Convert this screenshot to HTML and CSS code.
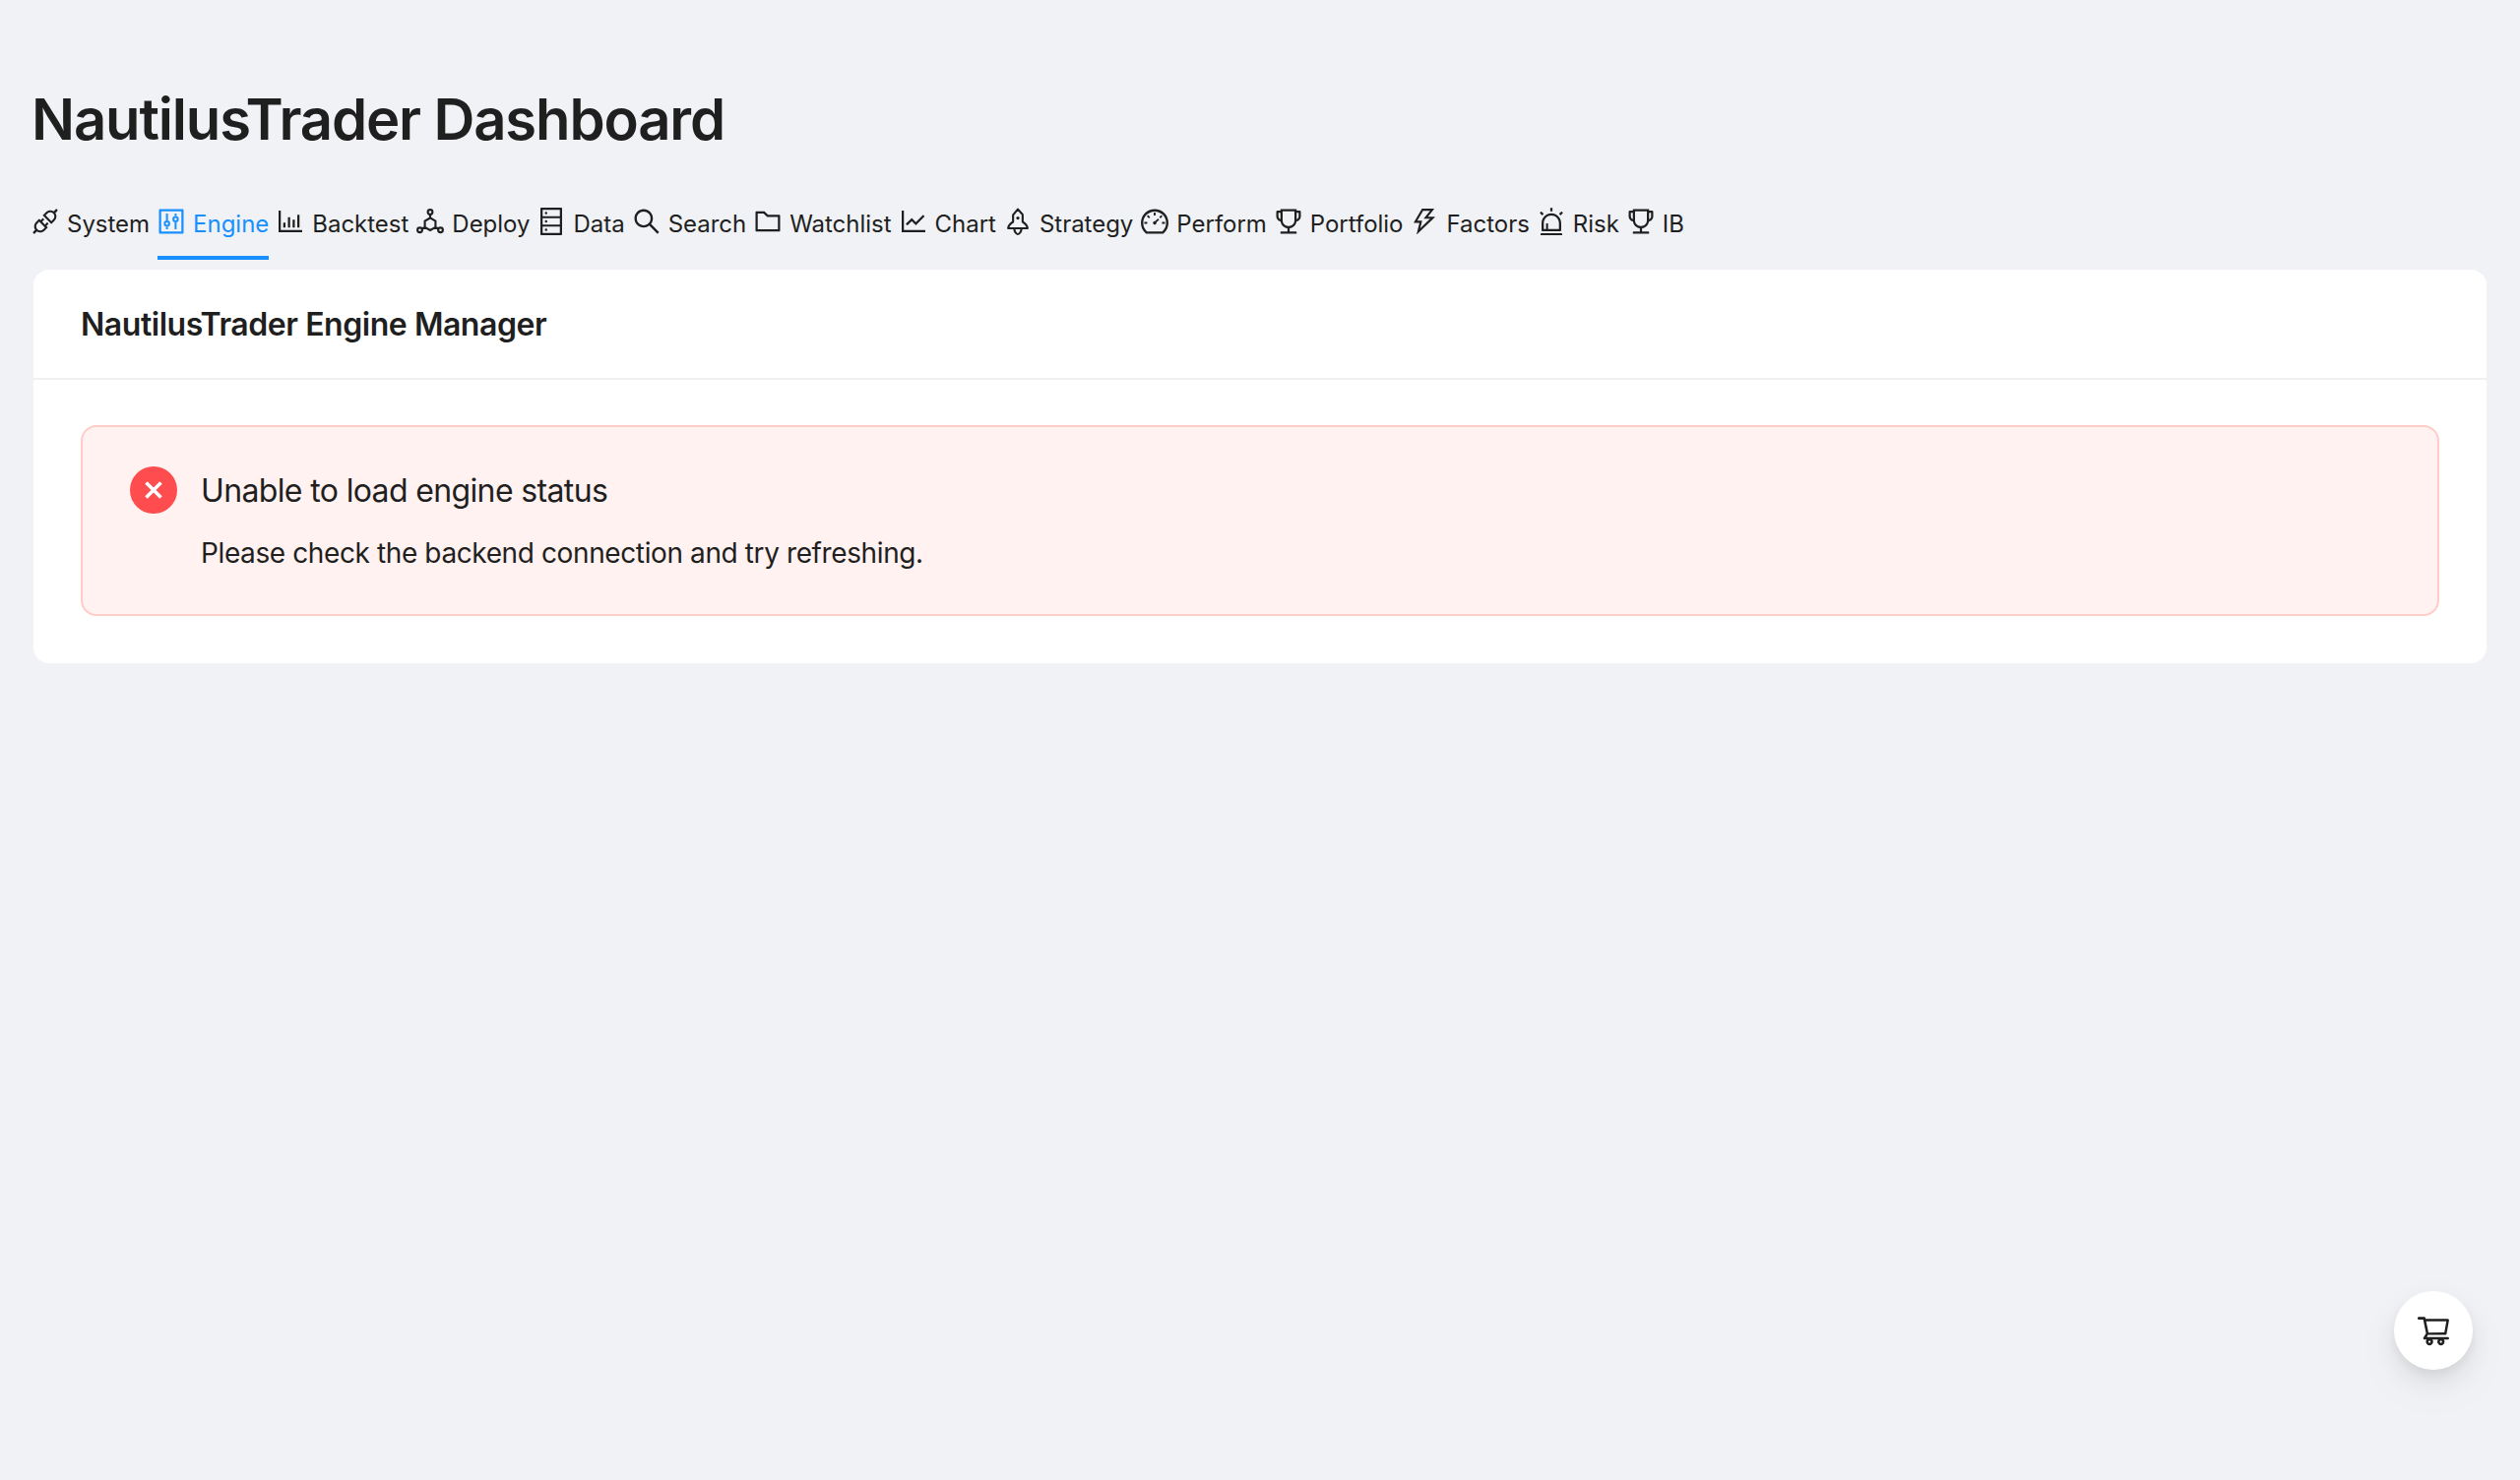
FILE: index.html
```html
<!DOCTYPE html>
<html lang="en">
<head>
<meta charset="utf-8">
<title>NautilusTrader Dashboard</title>
<link rel="stylesheet" href="styles.css">
</head>
<body>
<svg class="defs" aria-hidden="true">
  <symbol id="i-trophy" viewBox="64 64 896 896"><path d="M868 160h-92v-40c0-4.4-3.6-8-8-8H256c-4.4 0-8 3.6-8 8v40h-92a44 44 0 00-44 44v148c0 81.7 60 149.6 138.2 162C265.7 630.2 359 721.7 476 734.5v105.2H280c-17.7 0-32 14.3-32 32V904c0 4.4 3.6 8 8 8h512c4.4 0 8-3.6 8-8v-32.3c0-17.7-14.3-32-32-32H548V734.5C665 721.7 758.3 630.2 773.8 514 852 501.6 912 433.7 912 352V204a44 44 0 00-44-44zM184 352V232h64v207.6a91.99 91.99 0 01-64-87.6zm520 128c0 49.1-19.1 95.4-53.9 130.1-34.8 34.8-81 53.9-130.1 53.9h-16c-49.1 0-95.4-19.1-130.1-53.9-34.8-34.8-53.9-81-53.9-130.1V184h384v296zm136-128c0 41-26.9 75.8-64 87.6V232h64v120z"/></symbol>
</svg>
<main class="page">
  <h1 class="title">NautilusTrader Dashboard</h1>
  <nav class="tabs">
    <a class="tab"><svg class="ico" viewBox="64 64 896 896"><path d="M917.7 148.8l-42.4-42.4c-1.6-1.6-3.6-2.3-5.7-2.3s-4.1.8-5.7 2.3l-76.1 76.1a199.27 199.27 0 00-112.1-34.3c-51.2 0-102.4 19.5-141.5 58.6L432.3 308.7a8.03 8.03 0 000 11.3L704 591.7c1.6 1.6 3.6 2.3 5.7 2.3 2 0 4.1-.8 5.7-2.3l101.9-101.9c68.9-69 77-175.7 24.3-253.5l76.1-76.1c3.1-3.2 3.1-8.3 0-11.4zM769.1 441.7l-59.4 59.4-186.8-186.8 59.4-59.4c24.9-24.9 58.1-38.7 93.4-38.7 35.3 0 68.4 13.7 93.4 38.7 24.9 24.9 38.7 58.1 38.7 93.4 0 35.3-13.8 68.4-38.7 93.4zm-190.2 105a8.03 8.03 0 00-11.3 0L501 613.3 410.7 523l66.7-66.7c3.1-3.1 3.1-8.2 0-11.3L441 408.6a8.03 8.03 0 00-11.3 0L363 475.3l-43-43a7.85 7.85 0 00-5.7-2.3c-2 0-4.1.8-5.7 2.3L206.8 534.2c-68.9 69-77 175.7-24.3 253.5l-76.1 76.1a8.03 8.03 0 000 11.3l42.4 42.4c1.6 1.6 3.6 2.3 5.7 2.3s4.1-.8 5.7-2.3l76.1-76.1c33.7 22.9 72.9 34.3 112.1 34.3 51.2 0 102.4-19.5 141.5-58.6l101.9-101.9c3.1-3.1 3.1-8.2 0-11.3l-43-43 66.7-66.7c3.1-3.1 3.1-8.2 0-11.3l-36.6-36.2zM441.7 769.1a131.32 131.32 0 01-93.4 38.7c-35.3 0-68.4-13.7-93.4-38.7a131.32 131.32 0 01-38.7-93.4c0-35.3 13.7-68.4 38.7-93.4l59.4-59.4 186.8 186.8-59.4 59.4z"/></svg><span>System</span></a>
    <a class="tab active"><svg class="ico" viewBox="64 64 896 896"><path fill-rule="evenodd" d="M144 112h736c17.7 0 32 14.3 32 32v736c0 17.7-14.3 32-32 32H144c-17.700 0-32-14.300-32-32V144c0-17.700 14.300-32 32-32zm40 72v656h656V184z"/><g class="st" stroke-width="64"><path d="M372 256v224M372 688v80M652 256v80M652 544v224"/><circle cx="372" cy="584" r="72"/><circle cx="652" cy="440" r="72"/></g></svg><span>Engine</span></a>
    <a class="tab"><svg class="ico" viewBox="64 64 896 896"><path d="M888 792H200V168c0-4.400-3.600-8-8-8h-56c-4.400 0-8 3.600-8 8v688c0 4.400 3.600 8 8 8h752c4.400 0 8-3.600 8-8v-56c0-4.400-3.600-8-8-8zm-600-80h56c4.400 0 8-3.600 8-8V560c0-4.400-3.600-8-8-8h-56c-4.400 0-8 3.600-8 8v144c0 4.400 3.600 8 8 8zm152 0h56c4.400 0 8-3.600 8-8V384c0-4.400-3.600-8-8-8h-56c-4.400 0-8 3.600-8 8v320c0 4.400 3.600 8 8 8zm152 0h56c4.400 0 8-3.600 8-8V462c0-4.400-3.600-8-8-8h-56c-4.400 0-8 3.600-8 8v242c0 4.400 3.600 8 8 8zm152 0h56c4.400 0 8-3.600 8-8V304c0-4.400-3.600-8-8-8h-56c-4.400 0-8 3.600-8 8v400c0 4.400 3.600 8 8 8z"/></svg><span>Backtest</span></a>
    <a class="tab"><svg class="ico" viewBox="64 64 896 896"><g class="st" stroke-width="68"><circle cx="512" cy="208" r="76"/><circle cx="176" cy="790" r="76"/><circle cx="848" cy="790" r="76"/><path d="M512 284v116L685 500v200L512 800 339 700V500L512 400M339 700l-97 52M685 700l97 52"/></g></svg><span>Deploy</span></a>
    <a class="tab"><svg class="ico" viewBox="64 64 896 896"><path d="M832 64H192c-17.700 0-32 14.300-32 32v832c0 17.700 14.300 32 32 32h640c17.700 0 32-14.300 32-32V96c0-17.700-14.300-32-32-32zm-600 72h560v208H232V136zm560 480H232V408h560v208zm0 272H232V680h560v208zM304 240a40 40 0 1080 0 40 40 0 10-80 0zm0 272a40 40 0 1080 0 40 40 0 10-80 0zm0 272a40 40 0 1080 0 40 40 0 10-80 0z"/></svg><span>Data</span></a>
    <a class="tab"><svg class="ico" viewBox="64 64 896 896"><path d="M909.600 854.500L649.900 594.800C690.200 542.700 712 479 712 412c0-80.200-31.300-155.400-87.900-212.100-56.600-56.700-132-87.900-212.100-87.900s-155.500 31.300-212.100 87.900C143.200 256.500 112 331.800 112 412c0 80.100 31.300 155.500 87.900 212.100C256.500 680.800 331.800 712 412 712c67 0 130.600-21.800 182.700-62l259.700 259.600a8.200 8.200 0 0011.600 0l43.600-43.500a8.200 8.200 0 000-11.600zM570.400 570.400C528 612.700 471.800 636 412 636s-116-23.300-158.400-65.600C211.300 528 188 471.800 188 412s23.300-116.100 65.600-158.400C296 211.300 352.200 188 412 188s116.100 23.200 158.400 65.600S636 352.200 636 412s-23.300 116.100-65.600 158.400z"/></svg><span>Search</span></a>
    <a class="tab"><svg class="ico" viewBox="64 64 896 896"><path d="M880 298.400H521L403.700 186.200a8.150 8.150 0 00-5.500-2.200H144c-17.700 0-32 14.300-32 32v592c0 17.700 14.300 32 32 32h736c17.700 0 32-14.300 32-32V330.400c0-17.700-14.300-32-32-32zM840 768H184V256h188.500l119.600 114.400H840V768z"/></svg><span>Watchlist</span></a>
    <a class="tab"><svg class="ico" viewBox="64 64 896 896"><path d="M888 792H200V168c0-4.400-3.600-8-8-8h-56c-4.400 0-8 3.600-8 8v688c0 4.400 3.600 8 8 8h752c4.400 0 8-3.600 8-8v-56c0-4.400-3.600-8-8-8zM305.800 637.700c3.100 3.100 8.100 3.100 11.300 0l138.300-137.600L583 628.500c3.100 3.100 8.200 3.100 11.300 0l275.400-275.300c3.100-3.100 3.100-8.200 0-11.300l-39.600-39.600a8.030 8.030 0 00-11.300 0l-230 229.900L461.400 404a8.030 8.030 0 00-11.300 0L266.300 586.700a8.030 8.030 0 000 11.300l39.500 39.700z"/></svg><span>Chart</span></a>
    <a class="tab"><svg class="ico" viewBox="64 64 896 896"><g class="st" stroke-width="68" stroke-linejoin="round"><path d="M512 116L392 262a60 60 0 00-36 55v210C280 570 214 625 196 736h632c-18-111-84-166-160-209V317a60 60 0 00-24-55z"/><path d="M396 736c0 110 64 190 116 190s116-80 116-190"/></g><circle cx="512" cy="400" r="52"/></svg><span>Strategy</span></a>
    <a class="tab"><svg class="ico" viewBox="64 64 896 896"><path d="M924.800 385.600a446.700 446.700 0 00-96-142.400 446.700 446.700 0 00-142.400-96C631.100 123.800 572.500 112 512 112s-119.100 11.800-174.400 35.200a446.700 446.700 0 00-142.400 96 446.700 446.700 0 00-96 142.400C75.800 440.900 64 499.500 64 560c0 132.700 58.300 257.700 159.900 343.100l1.700 1.400c5.800 4.800 13.100 7.500 20.600 7.500h531.700c7.500 0 14.800-2.700 20.600-7.500l1.700-1.400C901.700 817.700 960 692.700 960 560c0-60.500-11.900-119.100-35.200-174.400zM761.400 836H262.600A371.120 371.120 0 01140 560c0-99.400 38.700-192.800 109-263 70.300-70.300 163.700-109 263-109 99.400 0 192.800 38.700 263 109 70.300 70.300 109 163.700 109 263 0 105.600-44.500 205.500-122.600 276zM623.500 421.500a8.030 8.030 0 00-11.300 0L527.700 506c-18.700-5-39.400-.2-54.100 14.500a55.950 55.950 0 000 79.200 55.950 55.950 0 0079.200 0 55.870 55.870 0 0014.500-54.100l84.500-84.500c3.100-3.100 3.100-8.200 0-11.300l-28.300-28.300zM490 320h44c4.400 0 8-3.600 8-8v-80c0-4.400-3.600-8-8-8h-44c-4.400 0-8 3.600-8 8v80c0 4.400 3.600 8 8 8zm260 218v44c0 4.400 3.600 8 8 8h80c4.400 0 8-3.600 8-8v-44c0-4.400-3.600-8-8-8h-80c-4.400 0-8 3.600-8 8zm12.700-197.200l-31.100-31.100a8.030 8.030 0 00-11.300 0l-56.600 56.600a8.030 8.030 0 000 11.300l31.100 31.100c3.100 3.100 8.200 3.100 11.300 0l56.600-56.600c3.100-3.100 3.100-8.200 0-11.300zm-458.600-31.100a8.030 8.030 0 00-11.300 0l-31.100 31.100a8.030 8.030 0 000 11.300l56.600 56.600c3.100 3.100 8.200 3.100 11.300 0l31.100-31.100c3.100-3.100 3.100-8.200 0-11.300l-56.600-56.600zM262 530h-80c-4.400 0-8 3.600-8 8v44c0 4.400 3.600 8 8 8h80c4.400 0 8-3.600 8-8v-44c0-4.400-3.600-8-8-8z"/></svg><span>Perform</span></a>
    <a class="tab"><svg class="ico"><use href="#i-trophy"/></svg><span>Portfolio</span></a>
    <a class="tab"><svg class="ico" viewBox="64 64 896 896"><path d="M848 359.300H627.700L825.800 109c4.100-5.300.4-13-6.300-13H436c-2.800 0-5.500 1.500-6.900 4L170 547.500c-3.100 5.300.7 12 6.900 12h174.400l-89.400 357.600c-1.900 7.800 7.500 13.300 13.300 7.700L853.500 373c5.200-4.900 1.700-13.700-5.500-13.700zM378.200 732.500l60.300-241H281.100l189.600-327.400h224.600L487 427.400h211L378.200 732.500z"/></svg><span>Factors</span></a>
    <a class="tab"><svg class="ico" viewBox="64 64 896 896"><path d="M193 796c0 17.700 14.300 32 32 32h574c17.700 0 32-14.300 32-32V563c0-176.200-142.800-319-319-319S193 386.800 193 563v233zm72-233c0-136.400 110.600-247 247-247s247 110.600 247 247v193H404V585c0-5.500-4.500-10-10-10h-44c-5.500 0-10 4.500-10 10v171h-75V563zm-48.100-252.500l39.600-39.600c3.100-3.100 3.100-8.200 0-11.300l-67.900-67.900a8.030 8.030 0 00-11.300 0l-39.600 39.600a8.030 8.030 0 000 11.300l67.900 67.900c3.100 3.100 8.100 3.100 11.300 0zm669.600-79.200l-39.600-39.600a8.030 8.030 0 00-11.300 0l-67.900 67.900a8.030 8.030 0 000 11.300l39.600 39.600c3.100 3.100 8.200 3.100 11.300 0l67.900-67.900c3.100-3.200 3.100-8.200 0-11.300zM832 892H192c-17.700 0-32 14.300-32 32v24c0 4.400 3.600 8 8 8h688c4.400 0 8-3.600 8-8v-24c0-17.700-14.300-32-32-32zM484 180h56c4.400 0 8-3.600 8-8V76c0-4.400-3.600-8-8-8h-56c-4.400 0-8 3.600-8 8v96c0 4.400 3.600 8 8 8z"/></svg><span>Risk</span></a>
    <a class="tab"><svg class="ico"><use href="#i-trophy"/></svg><span>IB</span></a>
  </nav>
  <section class="card">
    <header class="card-head">NautilusTrader Engine Manager</header>
    <div class="card-body">
      <div class="alert">
        <span class="alert-icon"><svg viewBox="0 0 48 48"><path d="M16.500 16.500l15 15M31.500 16.500l-15 15"/></svg></span>
        <div class="alert-text">
          <div class="alert-msg">Unable to load engine status</div>
          <div class="alert-desc">Please check the backend connection and try refreshing.</div>
        </div>
      </div>
    </div>
  </section>
</main>
<button class="fab" type="button" aria-label="Cart"><svg viewBox="64 64 896 896"><path d="M922.900 701.900H327.400l29.900-60.900 496.800-.9c16.800 0 31.200-12 34.200-28.600l68.800-385.100c1.800-10.100-.9-20.500-7.500-28.400a34.990 34.990 0 00-26.600-12.500l-632-2.100-5.400-25.400c-3.400-16.200-18-28-34.600-28H96.500a35.300 35.300 0 100 70.600h125.900L246 312.800l58.100 281.300-74.800 122.100a34.960 34.960 0 00-3 36.800c6 11.900 18.100 19.400 31.500 19.400h62.800a102.430 102.430 0 00-20.600 61.700c0 56.600 46 102.600 102.600 102.600s102.600-46 102.600-102.600c0-22.300-7.400-44-20.600-61.700h161.100a102.430 102.430 0 00-20.600 61.700c0 56.600 46 102.600 102.600 102.600s102.600-46 102.600-102.600c0-22.300-7.400-44-20.600-61.700H923c19.400 0 35.300-15.800 35.300-35.300a35.420 35.420 0 00-35.400-35.200zM305.700 253l575.800 1.900-56.400 315.800-452.300.8L305.700 253zm96.900 612.700c-17.400 0-31.600-14.200-31.600-31.600 0-17.400 14.200-31.600 31.600-31.600s31.600 14.200 31.600 31.600a31.600 31.600 0 01-31.600 31.600zm325.100 0c-17.400 0-31.600-14.200-31.600-31.600 0-17.400 14.200-31.600 31.600-31.600s31.600 14.200 31.600 31.600a31.600 31.600 0 01-31.600 31.600z"/></svg></button>
</body>
</html>
```
FILE: styles.css
```css
html, body { margin: 0; height: 100%; }
body {
  background: #f0f2f5;
  color: #1f1f1f;
  font-family: Inter, "Liberation Sans", sans-serif;
  overflow: hidden;
}
.defs { display: none; }
.page { padding: 0 34px; }
.title {
  margin: 0 0 0 -2px;
  padding-top: 82px;
  font-size: 58px;
  line-height: 78px;
  font-weight: 600;
  letter-spacing: -1.150px;
}
.tabs {
  display: flex;
  gap: 8px;
  margin: 34px 0 0 -2px;
  height: 70px;
}
.tab {
  display: flex;
  align-items: center;
  gap: 8px;
  height: 70px;
  box-sizing: border-box;
  padding-top: 2px;
  font-size: 24px;
  line-height: 40px;
  letter-spacing: -.02px;
  border-bottom: 4px solid transparent;
  color: #1f1f1f;
}
.tab.active { color: #1890ff; border-bottom-color: #1890ff; }
.ico { width: 28px; height: 28px; fill: currentColor; flex: none; margin-top: -6px; }
.st { fill: none; stroke: currentColor; }
.card {
  margin-top: 10px;
  background: #fff;
  border-radius: 16px;
}
.card-head {
  height: 110px;
  padding: 0 48px;
  display: flex;
  align-items: center;
  font-size: 32px;
  font-weight: 600;
  letter-spacing: -.45px;
  border-bottom: 2px solid #f0f0f0;
}
.card-body { padding: 46px 48px 48px; }
.alert {
  display: flex;
  gap: 24px;
  padding: 40px 48px;
  background: #fff2f0;
  border: 2px solid #ffccc7;
  border-radius: 16px;
}
.alert-icon {
  width: 48px;
  height: 48px;
  border-radius: 50%;
  background: #ff4d4f;
  flex: none;
}
.alert-icon svg { display: block; width: 48px; height: 48px; fill: none; stroke: #fff; stroke-width: 3.500; }
.alert-msg { font-size: 32px; line-height: 50px; letter-spacing: -.64px; }
.alert-desc { font-size: 28px; line-height: 44px; margin-top: 16px; letter-spacing: -.39px; }
.fab {
  position: fixed;
  right: 48px;
  bottom: 112px;
  width: 80px;
  height: 80px;
  padding: 0;
  border: 0;
  border-radius: 50%;
  background: #fff;
  box-shadow: 0 12px 32px rgba(0,0,0,.08), 0 6px 12px rgba(0,0,0,.06), 0 18px 56px rgba(0,0,0,.04);
  display: flex;
  align-items: center;
  justify-content: center;
}
.fab svg { width: 32px; height: 32px; fill: #1f1f1f; }
```
